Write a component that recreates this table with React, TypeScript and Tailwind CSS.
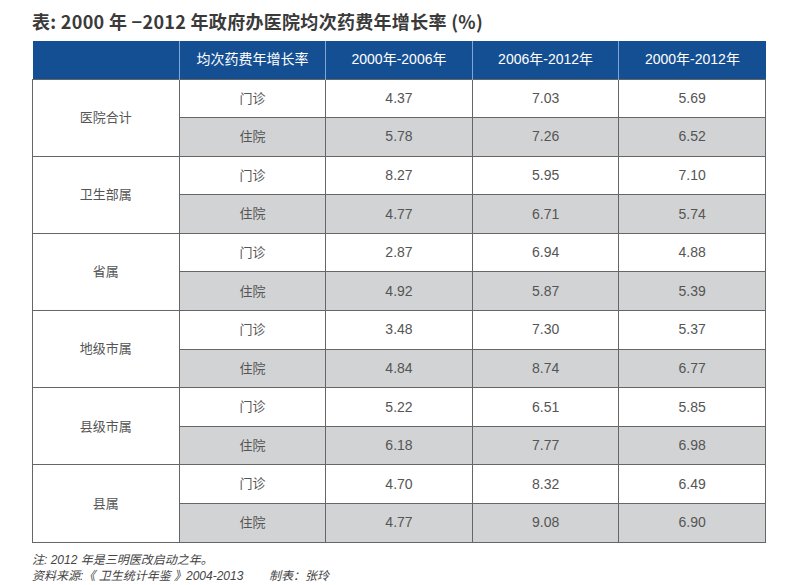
import React from "react";

const groups = [
  { name: "医院合计", rows: [["4.37", "7.03", "5.69"], ["5.78", "7.26", "6.52"]] },
  { name: "卫生部属", rows: [["8.27", "5.95", "7.10"], ["4.77", "6.71", "5.74"]] },
  { name: "省属", rows: [["2.87", "6.94", "4.88"], ["4.92", "5.87", "5.39"]] },
  { name: "地级市属", rows: [["3.48", "7.30", "5.37"], ["4.84", "8.74", "6.77"]] },
  { name: "县级市属", rows: [["5.22", "6.51", "5.85"], ["6.18", "7.77", "6.98"]] },
  { name: "县属", rows: [["4.70", "8.32", "6.49"], ["4.77", "9.08", "6.90"]] },
];

const headers = ["", "均次药费年增长率", "2000年-2006年", "2006年-2012年", "2000年-2012年"];

const font = { fontFamily: '"Liberation Sans", "Noto Sans CJK SC", sans-serif' };

export default function App() {
  return (
    <div className="w-[800px] h-[585px] bg-white pl-[32px] pt-[8px]" style={font}>
      <h1
        className="text-[18px] font-bold text-[#3a3a3a] leading-[26px] tracking-[0.3px]"
        style={{ fontFamily: '"Noto Sans CJK SC", sans-serif' }}
      >
        表: 2000 年 −2012 年政府办医院均次药费年增长率 (%)
      </h1>

      <table className="mt-[7px] w-[734px] border-collapse text-[13px] text-[#555] table-fixed">
        <thead>
          <tr className="h-[38px] bg-[#154f93] text-white text-[14px]">
            {headers.map((h, i) => (
              <th
                key={i}
                className={`font-normal text-center ${i > 0 ? "border-l border-[#7ea7d8]" : ""}`}
              >
                {h}
              </th>
            ))}
          </tr>
        </thead>
        <tbody>
          {groups.map((g) =>
            g.rows.map((r, j) => (
              <tr key={g.name + j} className={`h-[38.6px] ${j === 1 ? "bg-[#d2d3d4]" : "bg-white"}`}>
                {j === 0 && (
                  <td rowSpan={2} className="bg-white border border-[#666] text-center">
                    {g.name}
                  </td>
                )}
                <td className="border border-[#666] text-center">{j === 0 ? "门诊" : "住院"}</td>
                {r.map((v, k) => (
                  <td key={k} className="border border-[#666] text-center text-[14px]">
                    {v}
                  </td>
                ))}
              </tr>
            ))
          )}
        </tbody>
      </table>

      <div className="mt-[9px] text-[12px] leading-[16px] italic text-[#444]">
        <div>注: 2012 年是三明医改启动之年。</div>
        <div className="flex">
          <span className="w-[237px]">资料来源:《 卫生统计年鉴 》2004-2013</span>
          <span>制表：张玲</span>
        </div>
      </div>
    </div>
  );
}
